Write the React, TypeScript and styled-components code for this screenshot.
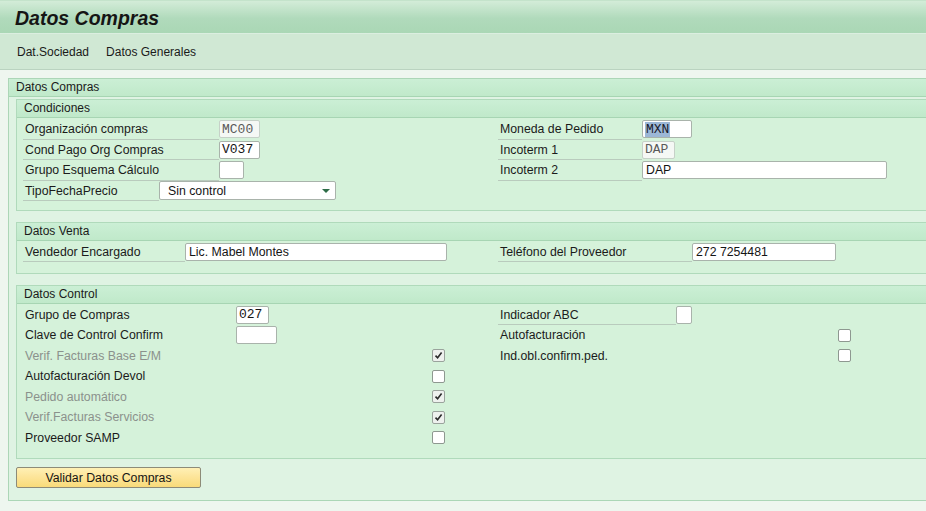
import React from "react";
import styled, { createGlobalStyle } from "styled-components";

const GlobalStyle = createGlobalStyle`
  html, body { margin: 0; padding: 0; }
  body {
    background: #eef6ef;
    overflow: hidden;
    font-family: "Liberation Sans", Arial, sans-serif;
    font-size: 12px;
    color: #1c1c1c;
  }
`;

const Page = styled.div`
  width: 940px;
`;

const TitleBar = styled.header`
  height: 34px;
  box-sizing: border-box;
  padding: 3px 0 0 15px;
  display: flex;
  align-items: center;
  border-top: 1px solid #c4e3cb;
  border-bottom: 1px solid #dbeee0;
  background: linear-gradient(#d3ecd8, #b0dabb 55%, #aad7b5);
`;

const Title = styled.h1`
  margin: 0;
  font-size: 19.5px;
  font-weight: bold;
  font-style: italic;
  color: #151515;
`;

const Toolbar = styled.nav`
  height: 35px;
  display: flex;
  align-items: center;
  gap: 17px;
  padding-left: 17px;
  background: #d0e8d4;
  border-bottom: 1px solid #bad3c0;
`;

const ToolItem = styled.span`
  font-size: 12px;
  color: #1a1a1a;
`;

const Strip = styled.div`
  height: 8px;
  background: #eef6ef;
`;

const OuterGroup = styled.section`
  margin-left: 8px;
  border: 1px solid #acd6b7;
  border-right: none;
  background: #dff3e3;
`;

const GroupHeader = styled.div`
  height: 17px;
  line-height: 17px;
  padding-left: 7px;
  font-size: 12px;
  color: #1a1a1a;
  background: linear-gradient(#cbefd5, #c0e9ca);
  border-bottom: 1px solid #a7d5b3;
`;

const OuterBody = styled.div`
  padding: 2px 0 12px 7px;
  display: flex;
  flex-direction: column;
  align-items: flex-start;
`;

const Group = styled.section`
  align-self: stretch;
  border: 1px solid #b0dabb;
  border-right: none;
  background: #d5f2da;
  & + & {
    margin-top: 10.5px;
  }
`;

const GroupBody = styled.div<{ $pb: number }>`
  padding: 1px 0 ${(p) => p.$pb}px 6px;
  display: grid;
  grid-template-columns: 475px 1fr;
`;

const Column = styled.div`
  display: flex;
  flex-direction: column;
`;

const Row = styled.div`
  height: 20.5px;
  display: flex;
  align-items: center;
`;

const Label = styled.span<{ $w: number; $line?: boolean; $off?: boolean }>`
  width: ${(p) => p.$w}px;
  height: 100%;
  box-sizing: border-box;
  padding: 1px 0 0 2px;
  display: flex;
  align-items: center;
  flex-shrink: 0;
  white-space: nowrap;
  font-size: 12.3px;
  color: ${(p) => (p.$off ? "#8b918c" : "#1b1b1b")};
  border-bottom: 1px solid ${(p) => (p.$line ? "#b9cbbd" : "transparent")};
`;

const Field = styled.div<{ $w: number; $mono?: boolean; $ro?: boolean }>`
  width: ${(p) => p.$w}px;
  height: 18px;
  box-sizing: border-box;
  padding-left: ${(p) => (p.$mono ? 2 : 3)}px;
  display: flex;
  align-items: center;
  flex-shrink: 0;
  white-space: nowrap;
  overflow: hidden;
  background: ${(p) => (p.$ro ? "#f5f8f5" : "#ffffff")};
  border: 1px solid ${(p) => (p.$ro ? "#c6d1c8" : "#a9b3ab")};
  border-radius: 2px;
  font-family: ${(p) =>
    p.$mono
      ? `"Liberation Mono", "Courier New", monospace`
      : `"Liberation Sans", Arial, sans-serif`};
  font-size: ${(p) => (p.$mono ? "13px" : "12.3px")};
  color: ${(p) => (p.$ro ? "#5a5a5a" : "#151515")};
`;

const Selected = styled.span`
  background: #9cb7d6;
  padding: 0 1px;
  line-height: 15px;
  color: #1a1a2a;
`;

const Select = styled.div<{ $w: number }>`
  width: ${(p) => p.$w}px;
  height: 19px;
  box-sizing: border-box;
  padding: 0 5px 0 8px;
  display: flex;
  align-items: center;
  justify-content: space-between;
  background: #ffffff;
  border: 1px solid #a9b3ab;
  border-radius: 2px;
  font-size: 12.3px;
  color: #151515;
`;

const Arrow = styled.span`
  width: 0;
  height: 0;
  border-left: 4px solid transparent;
  border-right: 4px solid transparent;
  border-top: 4px solid #2d6c47;
`;

const Box = styled.span<{ $off?: boolean }>`
  width: 13px;
  height: 13px;
  box-sizing: border-box;
  display: flex;
  align-items: center;
  justify-content: center;
  flex-shrink: 0;
  border: 1px solid ${(p) => (p.$off ? "#9aa39c" : "#8e9890")};
  border-radius: 2px;
  background: ${(p) => (p.$off ? "#eef1ee" : "#ffffff")};
`;

const Button = styled.button`
  margin-top: 8px;
  width: 185px;
  height: 21px;
  padding: 0;
  border: 1px solid #8d8b78;
  border-radius: 2px;
  background: linear-gradient(#fff0b5, #fde59a 45%, #f9db7a);
  font-family: "Liberation Sans", Arial, sans-serif;
  font-size: 12.3px;
  color: #151515;
  cursor: pointer;
`;

type Input = {
  kind: "input";
  label: string;
  lw: number;
  w: number;
  value?: string;
  mono?: boolean;
  ro?: boolean;
  selected?: boolean;
  line?: boolean;
};
type Sel = { kind: "select"; label: string; lw: number; w: number; value: string };
type Check = { kind: "check"; label: string; lw: number; checked?: boolean; off?: boolean };
type Item = Input | Sel | Check;

const CheckBox = ({ off, checked }: { off?: boolean; checked?: boolean }) => (
  <Box $off={off}>
    {checked && (
      <svg width="9" height="9" viewBox="0 0 9 9">
        <path d="M1.5 4.6 L3.6 6.8 L7.6 1.6" fill="none" stroke="#2a2a2a" strokeWidth="1.6" />
      </svg>
    )}
  </Box>
);

const FormRow = ({ item }: { item: Item }) => {
  if (item.kind === "check") {
    return (
      <Row>
        <Label $w={item.lw} $off={item.off}>
          {item.label}
        </Label>
        <CheckBox off={item.off} checked={item.checked} />
      </Row>
    );
  }
  if (item.kind === "select") {
    return (
      <Row>
        <Label $w={item.lw} $line>
          {item.label}
        </Label>
        <Select $w={item.w}>
          <span>{item.value}</span>
          <Arrow />
        </Select>
      </Row>
    );
  }
  return (
    <Row>
      <Label $w={item.lw} $line={item.line !== false}>
        {item.label}
      </Label>
      <Field $w={item.w} $mono={item.mono} $ro={item.ro}>
        {item.selected ? <Selected>{item.value}</Selected> : item.value}
      </Field>
    </Row>
  );
};

const groups: { title: string; pb: number; left: Item[]; right: Item[] }[] = [
  {
    title: "Condiciones",
    pb: 9,
    left: [
      { kind: "input", label: "Organización compras", lw: 196, w: 41, value: "MC00", mono: true, ro: true },
      { kind: "input", label: "Cond Pago Org Compras", lw: 196, w: 41, value: "V037", mono: true },
      { kind: "input", label: "Grupo Esquema Cálculo", lw: 196, w: 25, value: "" },
      { kind: "select", label: "TipoFechaPrecio", lw: 136, w: 177, value: "Sin control" },
    ],
    right: [
      { kind: "input", label: "Moneda de Pedido", lw: 144, w: 50, value: "MXN", mono: true, selected: true },
      { kind: "input", label: "Incoterm 1", lw: 144, w: 33, value: "DAP", mono: true, ro: true },
      { kind: "input", label: "Incoterm 2", lw: 144, w: 245, value: "DAP" },
    ],
  },
  {
    title: "Datos Venta",
    pb: 11,
    left: [{ kind: "input", label: "Vendedor Encargado", lw: 162, w: 262, value: "Lic. Mabel Montes" }],
    right: [{ kind: "input", label: "Teléfono del Proveedor", lw: 194, w: 144, value: "272 7254481" }],
  },
  {
    title: "Datos Control",
    pb: 10,
    left: [
      { kind: "input", label: "Grupo de Compras", lw: 213, w: 33, value: "027", mono: true, line: false },
      { kind: "input", label: "Clave de Control Confirm", lw: 213, w: 41, value: "", line: false },
      { kind: "check", label: "Verif. Facturas Base E/M", lw: 409, checked: true, off: true },
      { kind: "check", label: "Autofacturación Devol", lw: 409 },
      { kind: "check", label: "Pedido automático", lw: 409, checked: true, off: true },
      { kind: "check", label: "Verif.Facturas Servicios", lw: 409, checked: true, off: true },
      { kind: "check", label: "Proveedor SAMP", lw: 409 },
    ],
    right: [
      { kind: "input", label: "Indicador ABC", lw: 178, w: 16, value: "" },
      { kind: "check", label: "Autofacturación", lw: 340 },
      { kind: "check", label: "Ind.obl.confirm.ped.", lw: 340 },
    ],
  },
];

export default function App() {
  return (
    <Page>
      <GlobalStyle />
      <TitleBar>
        <Title>Datos Compras</Title>
      </TitleBar>
      <Toolbar>
        <ToolItem>Dat.Sociedad</ToolItem>
        <ToolItem>Datos Generales</ToolItem>
      </Toolbar>
      <Strip />
      <OuterGroup>
        <GroupHeader>Datos Compras</GroupHeader>
        <OuterBody>
          {groups.map((g) => (
            <Group key={g.title}>
              <GroupHeader>{g.title}</GroupHeader>
              <GroupBody $pb={g.pb}>
                <Column>
                  {g.left.map((it) => (
                    <FormRow key={it.label} item={it} />
                  ))}
                </Column>
                <Column>
                  {g.right.map((it) => (
                    <FormRow key={it.label} item={it} />
                  ))}
                </Column>
              </GroupBody>
            </Group>
          ))}
          <Button>Validar Datos Compras</Button>
        </OuterBody>
      </OuterGroup>
    </Page>
  );
}
